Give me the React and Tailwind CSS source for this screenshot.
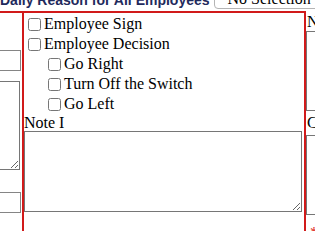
import React from "react";

function Check({ label, indent }) {
  return (
    <div className={`flex items-center h-[20px] ${indent ? "pl-[20px]" : ""}`}>
      <input type="checkbox" className="m-0 ml-[4px] mr-[3px] w-[13px] h-[13px] shrink-0" />
      <span className="leading-[20px] whitespace-nowrap">{label}</span>
    </div>
  );
}

export default function App() {
  return (
    <div className="w-[315px] h-[231px] overflow-hidden bg-white text-black font-['Liberation_Serif',serif] text-[16px]">
      {/* header */}
      <div className="flex h-[11px] overflow-hidden items-start">
        <div className="mt-[-8px] shrink-0 whitespace-nowrap font-['Liberation_Sans',Arial,sans-serif] font-bold text-[14px] leading-[16px] text-[#1f2a5c]">
          Daily Reason for All Employees
        </div>
        <div className="ml-[4px] mt-[-14px] h-[23px] w-[160px] shrink-0 border border-[#b4b4b4] rounded-[4px] pt-[3px] pl-[13px] leading-[18px] whitespace-nowrap">
          No Selection
        </div>
      </div>

      {/* body row */}
      <div className="flex h-[240px]">
        {/* left cell */}
        <div className="w-[22px] shrink-0 border-t-2 border-[#d11a1a] flex flex-col items-end">
          <div className="mt-[37px] mr-[1px] h-[21px] w-[150px] shrink-0 border border-[#858585]" />
          <textarea className="mt-[10px] mr-[2px] h-[89px] w-[150px] shrink-0 border border-[#767676] resize" />
          <div className="mt-[22px] mr-[1px] h-[21px] w-[150px] shrink-0 border border-[#858585]" />
        </div>

        {/* middle cell */}
        <div className="w-[284px] shrink-0 border-t-2 border-l-2 border-r-2 border-[#d11a1a] pt-[1px] flex flex-col">
          <Check label="Employee Sign" />
          <Check label="Employee Decision" />
          <Check label="Go Right" indent />
          <Check label="Turn Off the Switch" indent />
          <Check label="Go Left" indent />
          <div className="leading-[17px] h-[17px]">Note I</div>
          <textarea className="w-[278px] h-[81px] shrink-0 border border-[#767676] resize" />
        </div>

        {/* right cell */}
        <div className="w-[200px] shrink-0 pt-[2px] flex flex-col">
          <div className="leading-[18px] h-[18px] pl-[1px] whitespace-nowrap">Note II</div>
          <textarea className="w-[200px] h-[80px] shrink-0 border border-[#767676] resize" />
          <div className="leading-[24px] h-[24px] pl-[1px] whitespace-nowrap">Comments</div>
          <textarea className="w-[200px] h-[80px] shrink-0 border border-[#767676] resize" />
          <div className="mt-[9px] pl-[4px] leading-[18px] text-[#e02020]">*</div>
        </div>
      </div>
    </div>
  );
}
